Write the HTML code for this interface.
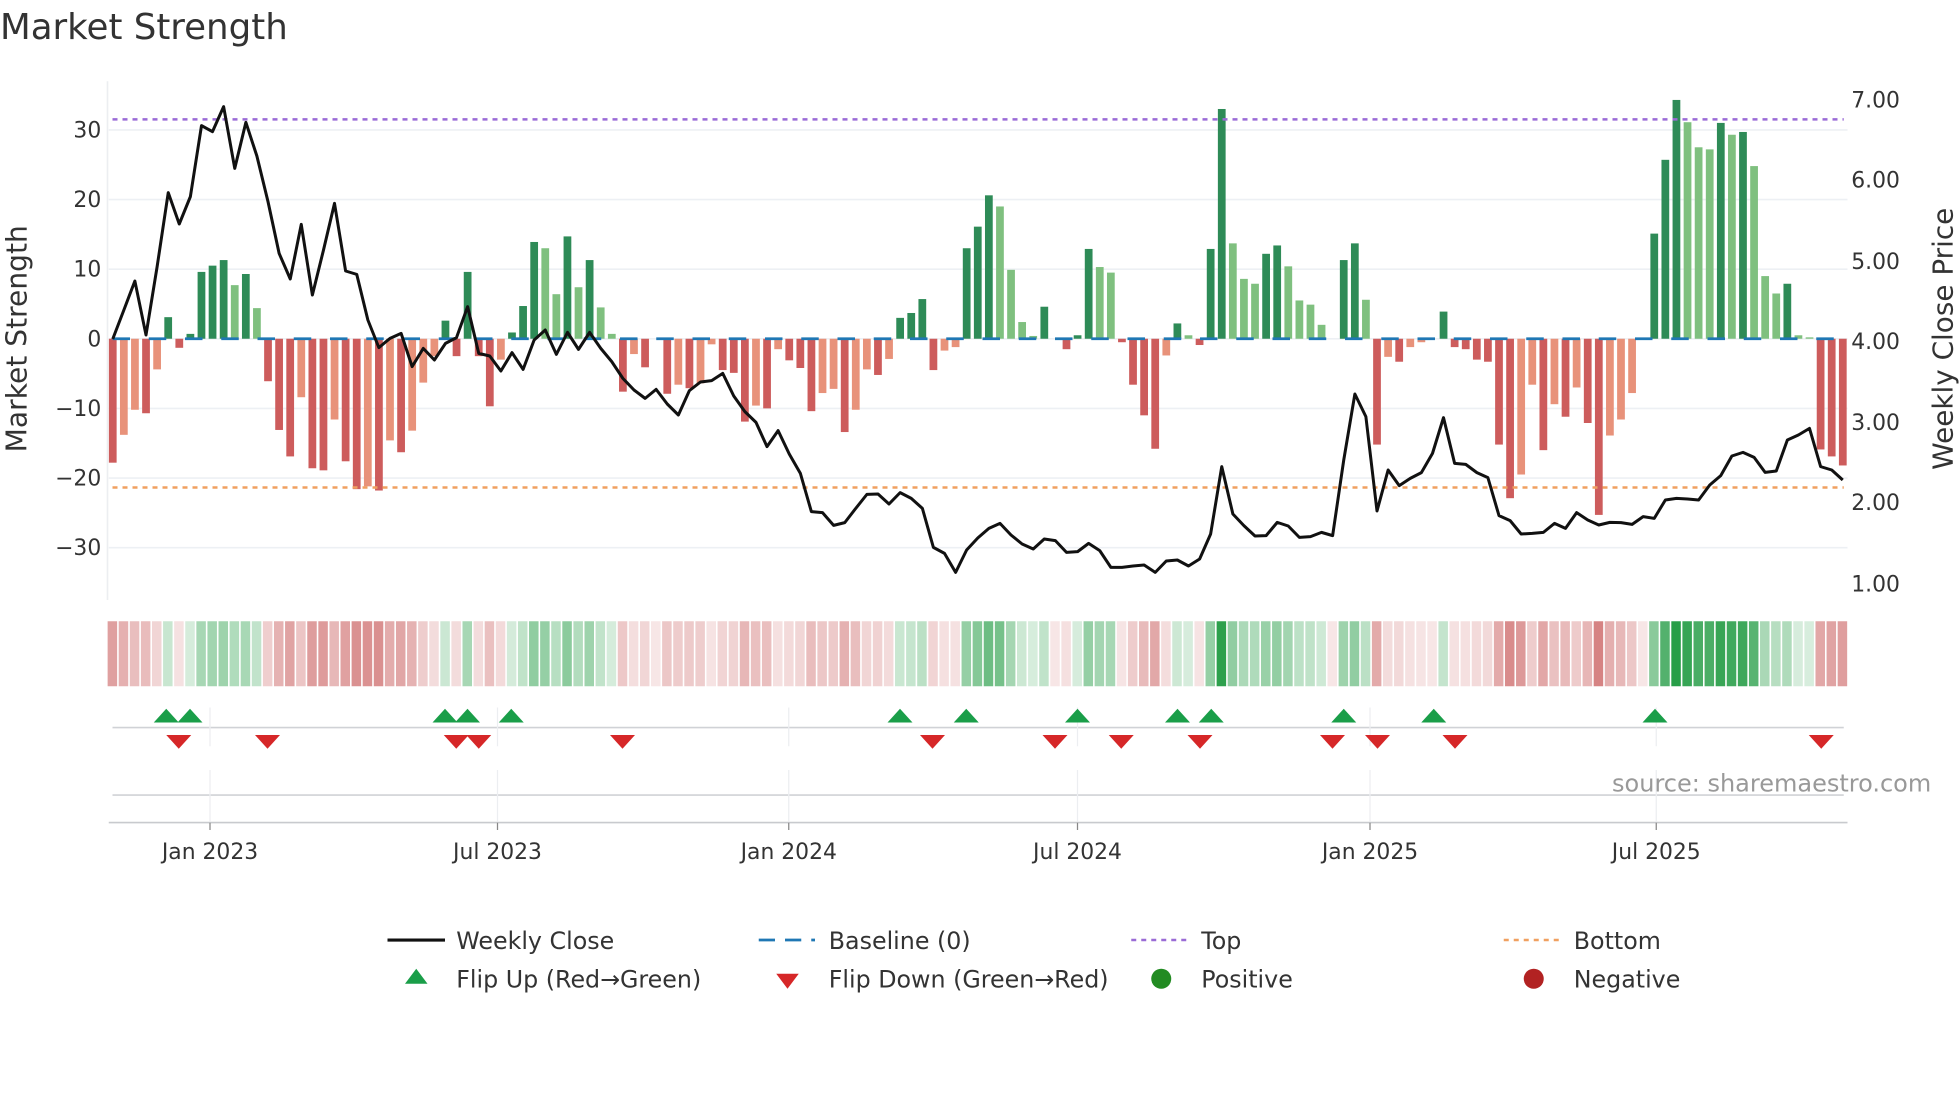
<!DOCTYPE html>
<html><head><meta charset="utf-8">
<style>
html,body{margin:0;padding:0;background:#fff;}
svg{display:block;font-family:"DejaVu Sans","Liberation Sans",sans-serif;}
</style></head>
<body>
<svg id="c" xmlns="http://www.w3.org/2000/svg" width="1960" height="1102" viewBox="0 0 1568 881.6">
<text x="0" y="31" font-size="28.5" fill="#333">Market Strength</text>
</svg>
<script>
const NS="http://www.w3.org/2000/svg";
const svg=document.getElementById('c');
function el(t,a,txt){const e=document.createElementNS(NS,t);for(const k in a)e.setAttribute(k,a[k]);if(txt!==undefined)e.textContent=txt;svg.appendChild(e);return e;}
const V=[ [-17.8,'D'],[-13.8,'L'],[-10.2,'L'],[-10.7,'D'],[-4.4,'L'],[3.1,'G'],[-1.3,'D'],[0.7,'G'],[9.6,'G'],[10.5,'G'],
[11.3,'G'],[7.7,'g'],[9.3,'G'],[4.4,'g'],[-6.1,'D'],[-13.1,'D'],[-16.9,'D'],[-8.4,'L'],[-18.6,'D'],[-18.9,'D'],
[-11.6,'L'],[-17.6,'D'],[-21.6,'D'],[-21.2,'L'],[-21.8,'D'],[-14.6,'L'],[-16.3,'D'],[-13.2,'L'],[-6.3,'L'],[-2.5,'L'],
[2.6,'G'],[-2.5,'D'],[9.6,'G'],[-2.5,'D'],[-9.7,'D'],[-3,'L'],[0.9,'G'],[4.7,'G'],[13.9,'G'],[13,'g'],
[6.4,'g'],[14.7,'G'],[7.4,'g'],[11.3,'G'],[4.5,'g'],[0.7,'g'],[-7.6,'D'],[-2.2,'L'],[-4.1,'D'],[0,'D'],
[-7.9,'D'],[-6.6,'L'],[-7.1,'D'],[-6.4,'L'],[-0.8,'L'],[-4.5,'D'],[-4.9,'D'],[-11.9,'D'],[-9.6,'L'],[-10,'D'],
[-1.5,'L'],[-3.1,'D'],[-4.2,'D'],[-10.4,'D'],[-7.8,'L'],[-7.2,'L'],[-13.4,'D'],[-10.2,'L'],[-4.4,'L'],[-5.2,'D'],
[-2.9,'L'],[3,'G'],[3.7,'G'],[5.7,'G'],[-4.5,'D'],[-1.7,'L'],[-1.2,'L'],[13,'G'],[16.1,'G'],[20.6,'G'],
[19,'g'],[9.9,'g'],[2.4,'g'],[0.4,'g'],[4.6,'G'],[0,'D'],[-1.5,'D'],[0.5,'G'],[12.9,'G'],[10.3,'g'],
[9.5,'g'],[-0.5,'D'],[-6.6,'D'],[-11,'D'],[-15.8,'D'],[-2.4,'L'],[2.2,'G'],[0.5,'g'],[-0.9,'D'],[12.9,'G'],
[33,'G'],[13.7,'g'],[8.6,'g'],[7.9,'g'],[12.2,'G'],[13.4,'G'],[10.4,'g'],[5.5,'g'],[4.9,'g'],[2,'g'],
[0,'g'],[11.3,'G'],[13.7,'G'],[5.6,'g'],[-15.2,'D'],[-2.6,'L'],[-3.3,'D'],[-1.2,'L'],[-0.5,'L'],[0,'D'],
[3.9,'G'],[-1.2,'D'],[-1.5,'D'],[-3,'D'],[-3.3,'D'],[-15.2,'D'],[-22.9,'D'],[-19.5,'L'],[-6.6,'L'],[-16,'D'],
[-9.4,'L'],[-11.2,'D'],[-7,'L'],[-12.1,'D'],[-25.3,'D'],[-13.9,'L'],[-11.6,'L'],[-7.8,'L'],[0,'L'],[15.1,'G'],
[25.7,'G'],[34.3,'G'],[31.1,'g'],[27.5,'g'],[27.2,'g'],[31,'G'],[29.3,'g'],[29.7,'G'],[24.8,'g'],[9,'g'],
[6.5,'g'],[7.9,'G'],[0.5,'g'],[0.2,'g'],[-15.9,'D'],[-16.9,'D'],[-18.2,'D']];
const P=[777,690,603,765,560,338,432,350,137,155,80,265,127,228,365,520,597,433,645,510,370,573,583,720,803,775,760,860,805,840,790,773,680,820,828,873,818,868,780,750,
823,757,808,757,805,845,895,930,955,928,972,1005,932,906,902,880,948,995,1027,1100,1052,1122,1180,1295,1298,1336,1328,1285,1243,1242,1272,1238,1255,1285,1402,1420,1477,1410,1374,1345,
1330,1365,1392,1407,1377,1382,1417,1415,1390,1412,1462,1462,1458,1455,1477,1443,1440,1458,1437,1362,1160,1302,1337,1368,1367,1327,1338,1372,1370,1357,1367,1140,942,1010,1293,1170,1217,1195,1178,
1120,1013,1150,1153,1178,1193,1307,1322,1362,1360,1357,1330,1345,1298,1320,1335,1327,1328,1333,1310,1315,1260,1255,1257,1260,1215,1187,1128,1117,1132,1177,1173,1080,1065,1045,1160,1170,1200];
const X=i=>90.2+i*8.872;
const Y0=271, K=5.57;
for(let v=-30;v<=30;v+=10){const y=Y0-K*v;el('line',{x1:87,x2:1478,y1:y,y2:y,stroke:'#edf0f4','stroke-width':1.3});
 el('text',{x:81,y:y+6,'font-size':17.5,fill:'#333','text-anchor':'end'},(v<0?'\u2212'+(-v):''+v));}
el('line',{x1:86,x2:86,y1:65,y2:480,stroke:'#eceef1','stroke-width':1.3});
[[7,79],[6,143],[5,208],[4,272],[3,337],[2,401],[1,466]].forEach(([p,y])=>el('text',{x:1481,y:y+7,'font-size':17.5,fill:'#333'},p.toFixed(2)));
el('text',{x:0,y:0,'font-size':22.5,fill:'#333','text-anchor':'middle',transform:'translate(21,271) rotate(-90)'},'Market Strength');
el('text',{x:0,y:0,'font-size':22.3,fill:'#333','text-anchor':'middle',transform:'translate(1562,271) rotate(-90)'},'Weekly Close Price');
const col={D:'#cd5c5c',L:'#e8927a',G:'#2e8b57',g:'#7fc07f'};
V.forEach(([v,c],i)=>{if(Math.abs(v)<0.15)return;const h=K*Math.abs(v);el('rect',{x:X(i)-3.1,y:v>0?Y0-h:Y0,width:6.2,height:h,fill:col[c]});});
el('line',{x1:90,x2:1475,y1:Y0,y2:Y0,stroke:'#1f77b4','stroke-width':2.2,'stroke-dasharray':'14 15'});
el('line',{x1:90,x2:1475,y1:95.5,y2:95.5,stroke:'#9a6bd6','stroke-width':2,'stroke-dasharray':'4 4'});
el('line',{x1:90,x2:1475,y1:390,y2:390,stroke:'#f0a060','stroke-width':2,'stroke-dasharray':'4 4'});
el('polyline',{points:P.map((z,i)=>X(i).toFixed(1)+','+((z/3+80)/1.25).toFixed(1)).join(' '),fill:'none',stroke:'#111','stroke-width':2.4,'stroke-linejoin':'round'});
function mix(a,t){return 'rgb('+a.map(c=>Math.round(255+(c-255)*t)).join(',')+')';}
V.forEach(([v],i)=>{let f;if(v>0.1){const t=0.18+0.82*Math.min(v/34,1);f=mix([40,158,72],t);}else{const t=0.15+0.6*Math.min(-v/25,1);f=mix([200,90,90],t);}
 el('rect',{x:X(i)-4.1,y:497,width:7.6,height:52,fill:f});});
el('line',{x1:90,x2:1475,y1:582,y2:582,stroke:'#d0d2d6','stroke-width':1.3});
el('line',{x1:90,x2:1475,y1:636,y2:636,stroke:'#d0d2d6','stroke-width':1.3});
el('line',{x1:87,x2:1478,y1:658,y2:658,stroke:'#c8cace','stroke-width':1.3});
const ticks=[[168,'Jan 2023'],[398,'Jul 2023'],[631,'Jan 2024'],[862,'Jul 2024'],[1096,'Jan 2025'],[1325,'Jul 2025']];
ticks.forEach(([x,t])=>{el('line',{x1:x,x2:x,y1:566,y2:597,stroke:'#eceef1','stroke-width':1});
 el('line',{x1:x,x2:x,y1:616,y2:658,stroke:'#eceef1','stroke-width':1});
 el('line',{x1:x,x2:x,y1:658,y2:664,stroke:'#888','stroke-width':1});
 el('text',{x:x,y:687,'font-size':17.5,fill:'#333','text-anchor':'middle'},t);});
[133,152,356,374,409,720,773,862,942,969,1075,1147,1324].forEach(x=>el('path',{d:`M${x-10},578 L${x},567 L${x+10},578 Z`,fill:'#1a9e49'}));
[143,214,365,383,498,746,844,897,960,1066,1102,1164,1457].forEach(x=>el('path',{d:`M${x-10},588 L${x},599 L${x+10},588 Z`,fill:'#d62728'}));
el('text',{x:1545,y:633,'font-size':19.2,fill:'#999','text-anchor':'end'},'source: sharemaestro.com');
const fs={'font-size':19,fill:'#333'};
el('line',{x1:310,x2:356,y1:752,y2:752,stroke:'#111','stroke-width':2.5});
el('text',Object.assign({x:365,y:759},fs),'Weekly Close');
el('line',{x1:607,x2:652,y1:752,y2:752,stroke:'#1f77b4','stroke-width':2.2,'stroke-dasharray':'13 8'});
el('text',Object.assign({x:663,y:759},fs),'Baseline (0)');
el('line',{x1:905,x2:950,y1:752,y2:752,stroke:'#9a6bd6','stroke-width':2,'stroke-dasharray':'4 4'});
el('text',Object.assign({x:961,y:759},fs),'Top');
el('line',{x1:1203,x2:1248,y1:752,y2:752,stroke:'#f0a060','stroke-width':2,'stroke-dasharray':'4 4'});
el('text',Object.assign({x:1259,y:759},fs),'Bottom');
el('path',{d:'M324,787 L333,775 L342,787 Z',fill:'#1a9e49'});
el('text',Object.assign({x:365,y:790},fs),'Flip Up (Red\u2192Green)');
el('path',{d:'M621,779 L630,791 L639,779 Z',fill:'#d62728'});
el('text',Object.assign({x:663,y:790},fs),'Flip Down (Green\u2192Red)');
el('circle',{cx:929,cy:783,r:8,fill:'#228b22'});
el('text',Object.assign({x:961,y:790},fs),'Positive');
el('circle',{cx:1227,cy:783,r:8,fill:'#b22222'});
el('text',Object.assign({x:1259,y:790},fs),'Negative');
</script>
</body></html>
